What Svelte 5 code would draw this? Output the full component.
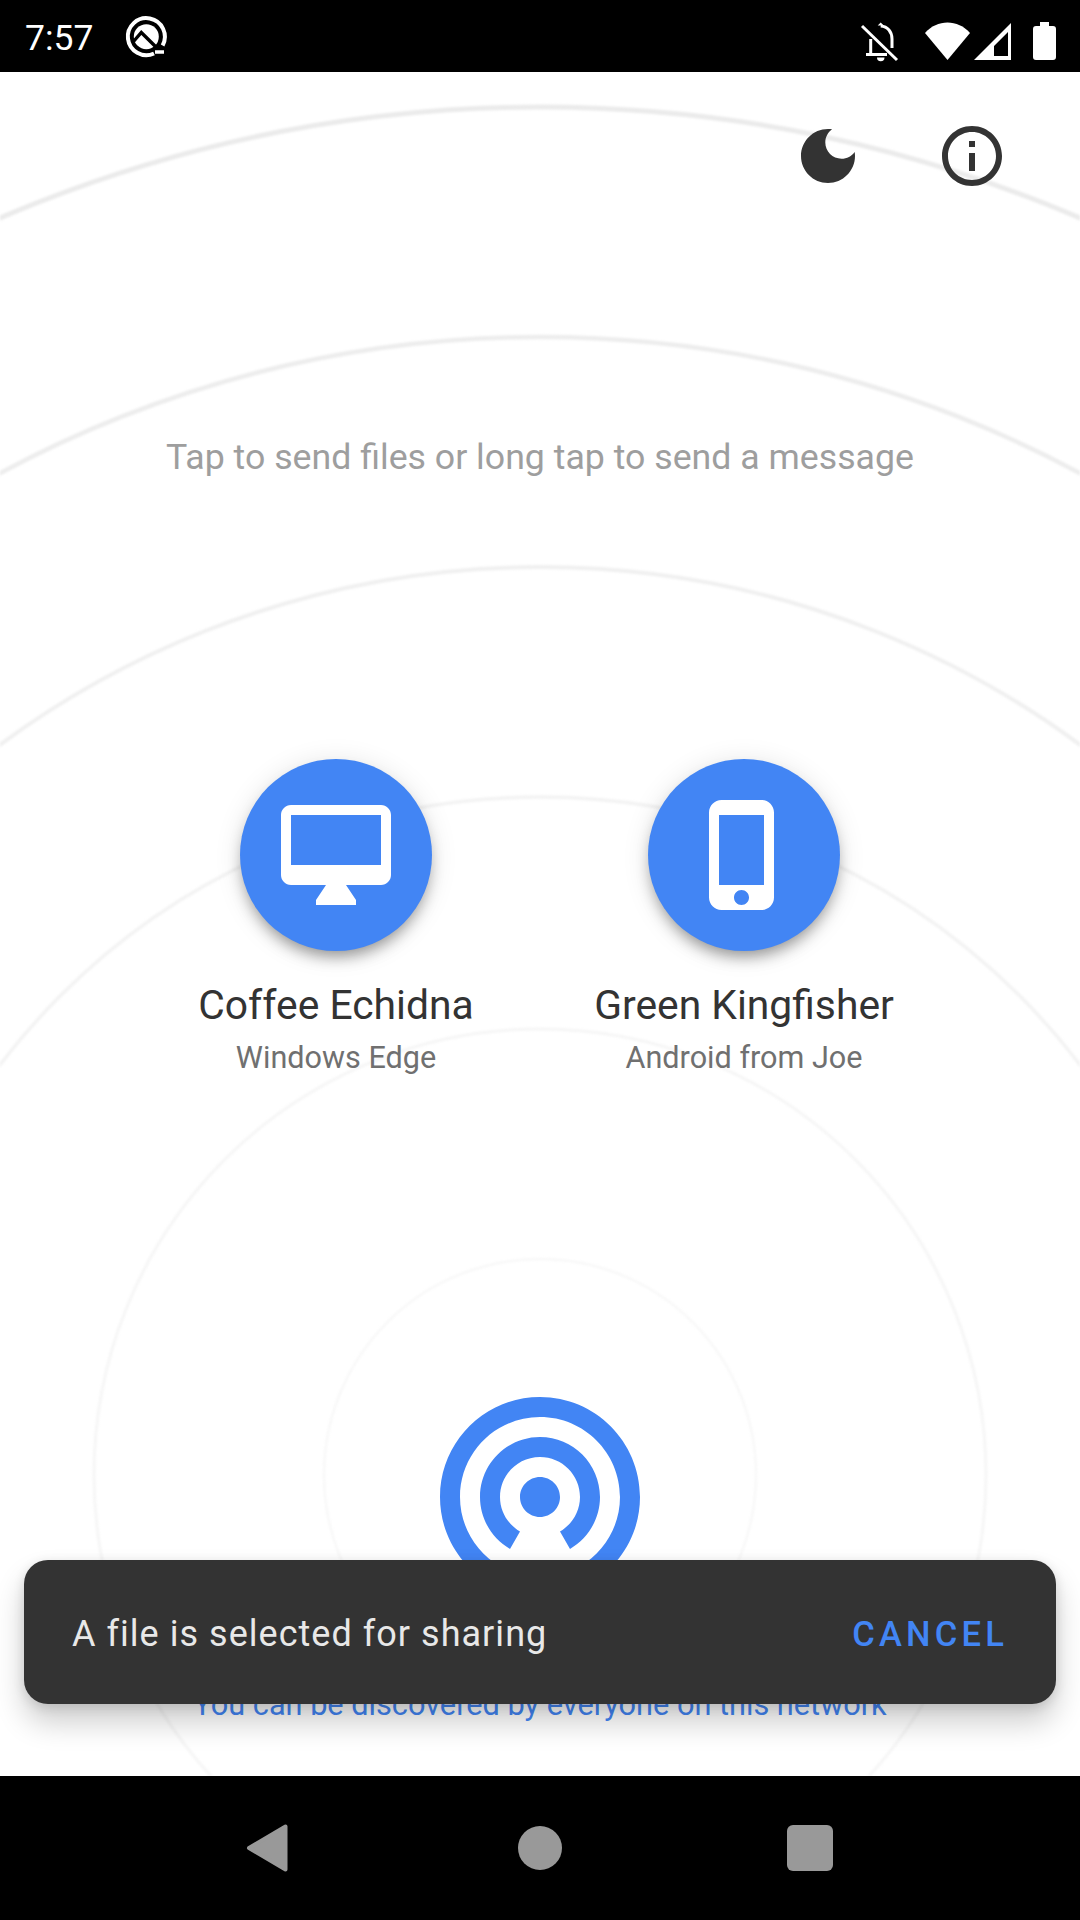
<script>
  const rings = [
    { r: 216, w: 2.5, c: '#f8f8f8' },
    { r: 446, w: 3, c: '#f6f6f6' },
    { r: 678, w: 3.5, c: '#f3f3f3' },
    { r: 908, w: 4, c: '#f0f0f0' },
    { r: 1138, w: 4.5, c: '#ededed' },
    { r: 1368, w: 5, c: '#ebebeb' }
  ];
  const peers = [
    { name: 'Coffee Echidna', device: 'Windows Edge', icon: 'M21 2H3c-1.1 0-2 .9-2 2v12c0 1.1.9 2 2 2h7l-2 3v1h8v-1l-2-3h7c1.1 0 2-.9 2-2V4c0-1.1-.9-2-2-2zm0 12H3V4h18v10z' },
    { name: 'Green Kingfisher', device: 'Android from Joe', icon: 'M15.5 1h-8C6.12 1 5 2.12 5 3.5v17C5 21.88 6.12 23 7.5 23h8c1.38 0 2.5-1.12 2.5-2.5v-17C18 2.12 16.88 1 15.5 1zm-4 21c-.83 0-1.5-.67-1.5-1.5s.67-1.5 1.5-1.5 1.5.67 1.5 1.5-.67 1.5-1.5 1.5zm4.500-4H7V4h9v14z' }
  ];
</script>

<div class="screen">
  <div class="status">
    <span class="time">7:57</span>
    <svg class="q" viewBox="0 0 60 56" width="60" height="56">
      <path d="M36 44.500A18.500 18.500 0 1 1 44.600 36.500" fill="none" stroke="#fff" stroke-width="4" />
      <path d="M37 43H46" stroke="#fff" stroke-width="3.500" />
      <circle cx="28.300" cy="27.700" r="12.500" fill="#fff" />
      <path d="M15.500 32.500L23.300 23.500L39 39" fill="none" stroke="#000" stroke-width="3.400" />
    </svg>
    <span class="spacer"></span>
    <svg class="sys" viewBox="0 0 200 60" width="200" height="60">
      <g fill="none" stroke="#fff" stroke-width="3">
        <path d="M6 20L41 54" />
        <path d="M24.700 20c7 .5 11.300 6 11.300 13v9" />
        <path d="M14.700 33v15M10 48.500h21" />
      </g>
      <path d="M24.700 16.500l3 3h-6zM21 51.500h7.500a3.700 3.700 0 0 1-7.500 0z" fill="#fff" />
      <path d="M69 27C81 13 102 13 114 27L91.500 54Z" fill="#fff" />
      <path fill-rule="evenodd" d="M118 54L155 17V54ZM138 50H152V26L138 40Z" fill="#fff" />
      <path d="M184 16h9v4h4a3 3 0 0 1 3 3v28a3 3 0 0 1-3 3h-17a3 3 0 0 1-3-3V23a3 3 0 0 1 3-3h4z" fill="#fff" />
    </svg>
  </div>

  <main class="main">
    <svg class="rings" viewBox="0 0 1080 1704" width="1080" height="1704">
      {#each rings as ring}
        <circle cx="540" cy="1403" r={ring.r} fill="none" stroke={ring.c} stroke-width={ring.w} />
      {/each}
    </svg>

    <header class="actions">
      <svg class="action" viewBox="0 0 24 24">
        <path d="M12 3c-4.970 0-9 4.030-9 9s4.030 9 9 9 9-4.030 9-9c0-.46-.04-.92-.1-1.360-.98 1.370-2.580 2.260-4.400 2.260-2.980 0-5.400-2.420-5.400-5.400 0-1.810.89-3.420 2.260-4.400-.44-.06-.9-.1-1.360-.1z" />
      </svg>
      <svg class="action" viewBox="0 0 24 24">
        <path d="M11 17h2v-6h-2v6zm1-15C6.480 2 2 6.480 2 12s4.480 10 10 10 10-4.480 10-10S17.520 2 12 2zm0 18c-4.410 0-8-3.590-8-8s3.590-8 8-8 8 3.590 8 8-3.590 8-8 8zM11 9h2V7h-2v2z" />
      </svg>
    </header>

    <p class="hint">Tap to send files or long tap to send a message</p>

    <section class="peers">
      {#each peers as peer}
        <div class="peer">
          <div class="avatar">
            <svg viewBox="0 0 24 24" width="120" height="120"><path d={peer.icon} fill="#fff" /></svg>
          </div>
          <div class="name">{peer.name}</div>
          <div class="device">{peer.device}</div>
        </div>
      {/each}
    </section>

    <footer class="foot">
      <svg class="logo" viewBox="0 0 24 24" width="240" height="240">
        <path d="M12 11c-1.100 0-2 .9-2 2s.9 2 2 2 2-.9 2-2-.9-2-2-2zm6 2c0-3.310-2.690-6-6-6s-6 2.690-6 6c0 2.220 1.210 4.150 3 5.190l1-1.740c-1.190-.7-2-1.970-2-3.450 0-2.210 1.790-4 4-4s4 1.790 4 4c0 1.480-.81 2.750-2 3.450l1 1.740c1.790-1.040 3-2.970 3-5.190zM12 3C6.480 3 2 7.480 2 13c0 3.700 2.010 6.920 4.990 8.650l1-1.730C5.610 18.530 4 15.960 4 13c0-4.420 3.580-8 8-8s8 3.580 8 8c0 2.960-1.610 5.530-4 6.920l1 1.730c2.990-1.730 5-4.950 5-8.650 0-5.520-4.480-10-10-10z" fill="#4285f4" />
      </svg>
      <div class="discover">You can be discovered by everyone on this network</div>
    </footer>

    <div class="snackbar">
      <span class="msg">A file is selected for sharing</span>
      <span class="cancel">CANCEL</span>
    </div>
  </main>

  <nav class="nav">
    <svg viewBox="0 0 42 48" width="42" height="48" class="back">
      <path d="M3 24L39.500 2.500V45.500Z" fill="#999" stroke="#999" stroke-width="4" stroke-linejoin="round" />
    </svg>
    <span class="home"></span>
    <span class="recent"></span>
  </nav>
</div>

<style>
  :global(body) {
    margin: 0;
    background: #fff;
    font-family: Roboto, "Liberation Sans", sans-serif;
  }
  .screen {
    width: 1080px;
    height: 1920px;
    display: flex;
    flex-direction: column;
    overflow: hidden;
  }
  .status {
    height: 72px;
    flex: none;
    background: #000;
    color: #fff;
    display: flex;
    align-items: center;
    padding: 0 24px 0 25px;
    box-sizing: border-box;
  }
  .time {
    font-size: 35.500px;
    line-height: 72px;
    padding-top: 3px;
    width: 67px;
    white-space: nowrap;
  }
  .q {
    margin-left: 26px;
    flex: none;
    padding-top: 1px;
  }
  .spacer {
    flex: 1;
  }
  .sys {
    flex: none;
  }
  .main {
    flex: 1;
    position: relative;
    display: flex;
    flex-direction: column;
    overflow: hidden;
  }
  .rings {
    position: absolute;
    left: 0;
    top: 0;
    filter: blur(0.8px);
  }
  .actions {
    position: relative;
    display: flex;
    justify-content: flex-end;
    gap: 72px;
    padding: 48px 72px 0 0;
    height: 120px;
  }
  .action {
    width: 72px;
    height: 72px;
    fill: #333;
  }
  .hint {
    position: relative;
    margin: 0;
    padding-top: 193px;
    text-align: center;
    font-size: 35.700px;
    line-height: 48px;
    color: #9e9e9e;
  }
  .peers {
    position: relative;
    display: flex;
    justify-content: center;
    padding-top: 278px;
  }
  .peer {
    width: 408px;
    display: flex;
    flex-direction: column;
    align-items: center;
  }
  .avatar {
    width: 192px;
    height: 192px;
    border-radius: 50%;
    background: #4285f4;
    display: flex;
    align-items: center;
    justify-content: center;
    box-shadow: 0 9px 15px -4px rgba(0, 0, 0, 0.4), 0 3px 24px 4px rgba(0, 0, 0, 0.08);
  }
  .avatar svg {
    display: block;
  }
  .name {
    margin-top: 28px;
    font-size: 40.800px;
    line-height: 52px;
    color: #333;
  }
  .device {
    margin-top: 7px;
    font-size: 30.600px;
    line-height: 40px;
    color: #707070;
  }
  .foot {
    position: relative;
    display: flex;
    flex-direction: column;
    align-items: center;
    padding-top: 289px;
  }
  .logo {
    display: block;
  }
  .discover {
    margin-top: 78px;
    font-size: 30.700px;
    line-height: 40px;
    color: #4285f4;
  }
  .snackbar {
    position: absolute;
    left: 24px;
    right: 24px;
    top: 1488px;
    height: 144px;
    box-sizing: border-box;
    padding: 3px 48px 0;
    display: flex;
    align-items: center;
    justify-content: space-between;
    background: #333;
    border-radius: 24px;
    box-shadow: 0 18px 30px 0 rgba(0, 0, 0, 0.2), 0 3px 12px rgba(0, 0, 0, 0.12);
  }
  .msg {
    font-size: 36px;
    color: #e8e8e8;
    letter-spacing: 1.030px;
  }
  .cancel {
    font-size: 34.500px;
    font-weight: 500;
    color: #4285f4;
    letter-spacing: 4.200px;
  }
  .nav {
    height: 144px;
    flex: none;
    background: #000;
    position: relative;
    display: grid;
    grid-template-columns: 1fr 1fr 1fr;
    align-items: center;
    justify-items: center;
  }
  .back {
    margin-left: 174px;
  }
  .home {
    width: 44px;
    height: 44px;
    border-radius: 50%;
    background: #999;
  }
  .recent {
    width: 46px;
    height: 46px;
    border-radius: 6px;
    background: #999;
    margin-right: 181px;
  }
</style>
